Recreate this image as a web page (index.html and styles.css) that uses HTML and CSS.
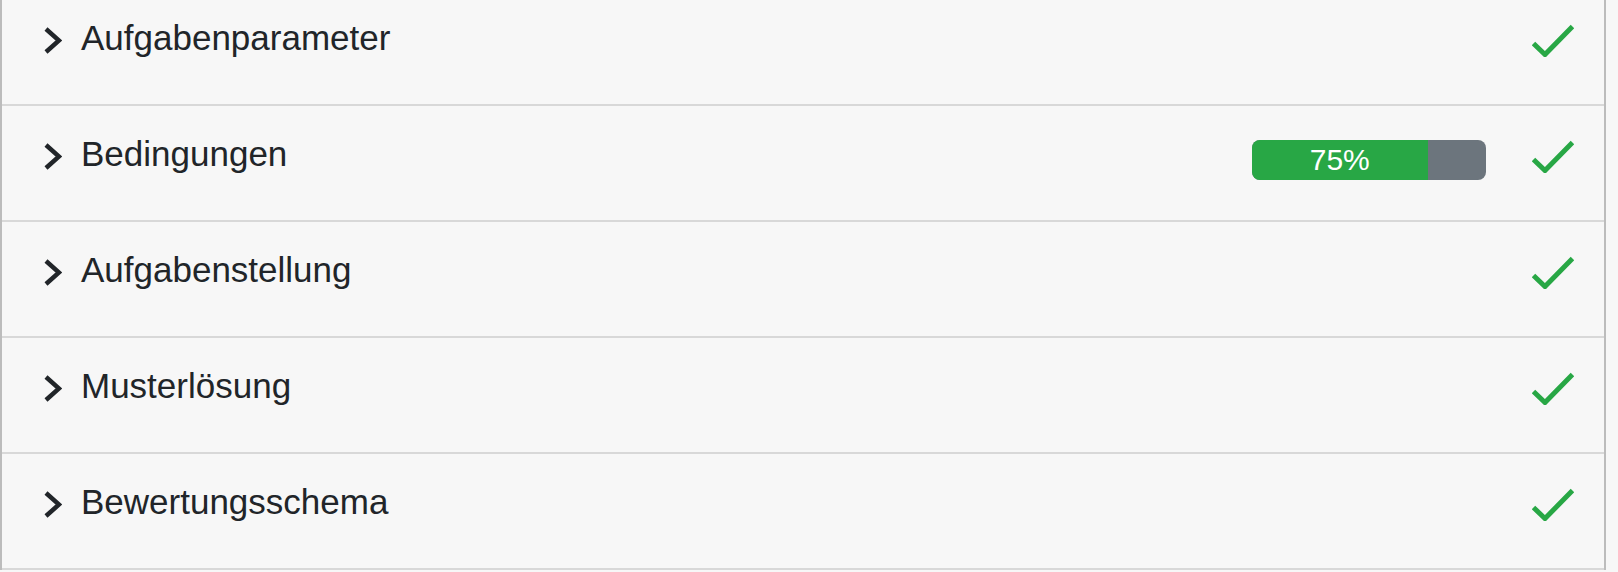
FILE: index.html
```html
<!DOCTYPE html>
<html lang="de">
<head>
<meta charset="utf-8">
<title>Aufgabe</title>
<link rel="stylesheet" href="styles.css">
</head>
<body>
<div class="panel">
  <div class="row">
    <svg class="chevron" viewBox="0 0 19 29" width="19" height="29"><polyline points="3,3 16,14.5 3,26"/></svg>
    <span class="title">Aufgabenparameter</span>
    <span class="spacer"></span>
    <svg class="check" viewBox="0 0 42 33" width="42" height="33"><polyline points="1.5,19.5 13,30.5 40.5,2.5"/></svg>
  </div>
  <div class="row">
    <svg class="chevron" viewBox="0 0 19 29" width="19" height="29"><polyline points="3,3 16,14.5 3,26"/></svg>
    <span class="title">Bedingungen</span>
    <span class="spacer"></span>
    <div class="progress"><div class="progress-bar" style="width:75%">75%</div></div>
    <svg class="check" viewBox="0 0 42 33" width="42" height="33"><polyline points="1.5,19.5 13,30.5 40.5,2.5"/></svg>
  </div>
  <div class="row">
    <svg class="chevron" viewBox="0 0 19 29" width="19" height="29"><polyline points="3,3 16,14.5 3,26"/></svg>
    <span class="title">Aufgabenstellung</span>
    <span class="spacer"></span>
    <svg class="check" viewBox="0 0 42 33" width="42" height="33"><polyline points="1.5,19.5 13,30.5 40.5,2.5"/></svg>
  </div>
  <div class="row">
    <svg class="chevron" viewBox="0 0 19 29" width="19" height="29"><polyline points="3,3 16,14.5 3,26"/></svg>
    <span class="title">Musterlösung</span>
    <span class="spacer"></span>
    <svg class="check" viewBox="0 0 42 33" width="42" height="33"><polyline points="1.5,19.5 13,30.5 40.5,2.5"/></svg>
  </div>
  <div class="row">
    <svg class="chevron" viewBox="0 0 19 29" width="19" height="29"><polyline points="3,3 16,14.5 3,26"/></svg>
    <span class="title">Bewertungsschema</span>
    <span class="spacer"></span>
    <svg class="check" viewBox="0 0 42 33" width="42" height="33"><polyline points="1.5,19.5 13,30.5 40.5,2.5"/></svg>
  </div>
</div>
</body>
</html>
```

FILE: styles.css
```css
html, body {
  margin: 0;
  padding: 0;
  background: #f7f7f7;
  overflow: hidden;
}

body {
  font-family: "Liberation Sans", Arial, Helvetica, sans-serif;
  color: #212529;
}

.panel {
  width: 1606px;
  box-sizing: border-box;
  margin-top: -10px;
  background: #f7f7f7;
  border-left: 2px solid #bcbcbc;
  border-right: 2px solid #bcbcbc;
}

.row {
  display: flex;
  align-items: center;
  height: 116px;
  box-sizing: border-box;
  padding: 0 30px 14px 41px;
  border-bottom: 2px solid #d8d8d8;
}

.chevron {
  flex: none;
  fill: none;
  stroke: #212529;
  stroke-width: 4.5;
  stroke-linejoin: miter;
  stroke-linecap: butt;
}

.title {
  margin-left: 19px;
  margin-bottom: 5px;
  font-size: 35px;
  line-height: 1;
  white-space: nowrap;
}

.spacer {
  flex: 1;
}

.progress {
  flex: none;
  width: 234px;
  height: 40px;
  margin-top: 8px;
  margin-right: 46px;
  border-radius: 8px;
  overflow: hidden;
  background: #6c757d;
  display: flex;
}

.progress-bar {
  height: 100%;
  background: #28a745;
  color: #fff;
  font-size: 30px;
  line-height: 40px;
  text-align: center;
}

.check {
  flex: none;
  fill: none;
  stroke: #28a745;
  stroke-width: 5;
  stroke-linecap: butt;
  stroke-linejoin: miter;
}
```
